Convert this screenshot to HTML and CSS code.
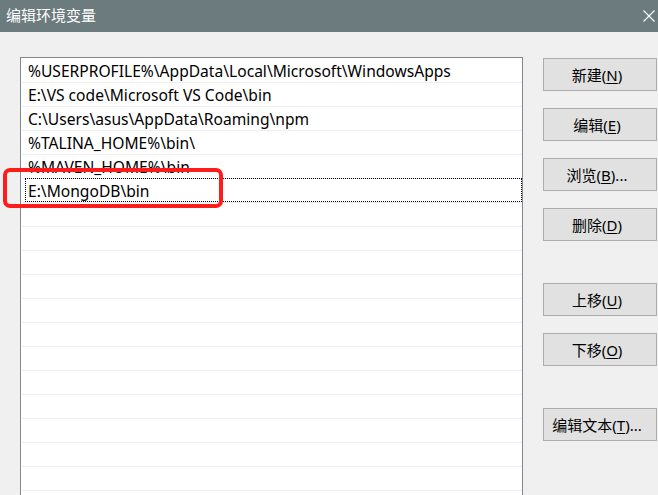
FILE: index.html
```html
<!DOCTYPE HTML>
<html lang="zh-CN">
<head>
  <meta charset="UTF-8">
  <title>编辑环境变量</title>
  <link rel="stylesheet" href="styles.css">
</head>
<body>

	<div class="window">

	  <div class="titlebar">
		<span class="title">编辑环境变量</span>
		<span class="close">
			<svg width="12" height="12" viewBox="0 0 12 12">
				<path d="M0.5 0.5 L11.5 11.5 M11.5 0.5 L0.5 11.5" stroke="#fff" stroke-width="1.1" fill="none"/>
			</svg>
		</span>
	  </div>

	  <div class="content">

		<div class="list">
			<div class="row">%USERPROFILE%\AppData\Local\Microsoft\WindowsApps</div>
			<div class="row">E:\VS code\Microsoft VS Code\bin</div>
			<div class="row">C:\Users\asus\AppData\Roaming\npm</div>
			<div class="row">%TALINA_HOME%\bin\</div>
			<div class="row">%MAVEN_HOME%\bin</div>
			<div class="row row-focus">E:\MongoDB\bin</div>
			<div class="row"></div>
			<div class="row"></div>
			<div class="row"></div>
			<div class="row"></div>
			<div class="row"></div>
			<div class="row"></div>
			<div class="row"></div>
			<div class="row"></div>
			<div class="row"></div>
			<div class="row"></div>
			<div class="row"></div>
			<div class="row"></div>
			<div class="row"></div>
		</div>

		<div class="buttons">
			<div class="group">
				<div class="btn">新建(<u>N</u>)</div>
				<div class="btn">编辑(<u>E</u>)</div>
				<div class="btn">浏览(<u>B</u>)...</div>
				<div class="btn">删除(<u>D</u>)</div>
			</div>
			<div class="group">
				<div class="btn">上移(<u>U</u>)</div>
				<div class="btn">下移(<u>O</u>)</div>
			</div>
			<div class="group">
				<div class="btn">编辑文本(<u>T</u>)...</div>
			</div>
		</div>

	  </div>

	  <!-- red annotation drawn over the screenshot -->
	  <div class="mark"></div>

	</div>

</body>
</html>
```

FILE: styles.css
```css
html, body {
	margin: 0;
	height: 100%;
	overflow: hidden;
}

body {
	background: #f0f0f0;
	font-family: "Noto Sans", "Noto Sans CJK SC", sans-serif;
	font-size: 15px;
	color: #000;
}

.window {
	position: relative;
	height: 100%;
	overflow: hidden;
}

.titlebar {
	height: 32px;
	background: #6c7b7d;
	display: flex;
	align-items: center;
	justify-content: space-between;
	padding: 0 1px 3px 6px;
	box-sizing: border-box;
}

.title {
	color: #fff;
	font-family: "Noto Sans CJK SC", sans-serif;
	font-size: 15px;
}

.close {
	display: flex;
	width: 14px;
	padding-top: 3px;
}

.content {
	display: flex;
	padding: 25px 0 0 20px;
	gap: 20px;
}

.list {
	width: 500px;
	height: 480px;
	border: 1px solid #828790;
	background: #fff;
	padding: 1px 0 0 1px;
	flex-shrink: 0;
}

.row {
	position: relative;
	height: 23px;
	line-height: 25px;
	border-bottom: 1px solid #efefef;
	padding-left: 6px;
	font-size: 15.6px;
	white-space: nowrap;
}

.row-focus::after {
	content: "";
	position: absolute;
	left: 3px;
	right: 0;
	top: -1px;
	bottom: 0;
	border: 1px dotted #000;
}

.buttons {
	display: flex;
	flex-direction: column;
	gap: 42px;
	padding-top: 1px;
}

.group {
	display: flex;
	flex-direction: column;
	gap: 17px;
}

.btn {
	width: 106px;
	height: 31px;
	border: 1px solid #adadad;
	background: #e1e1e1;
	display: flex;
	align-items: center;
	justify-content: center;
	padding-right: 6px;
	white-space: nowrap;
}

.btn u {
	text-underline-offset: 2px;
}

.mark {
	position: absolute;
	left: 3px;
	top: 168px;
	width: 212px;
	height: 32px;
	border: 4px solid #fe1c1c;
	border-radius: 7px;
}
```
